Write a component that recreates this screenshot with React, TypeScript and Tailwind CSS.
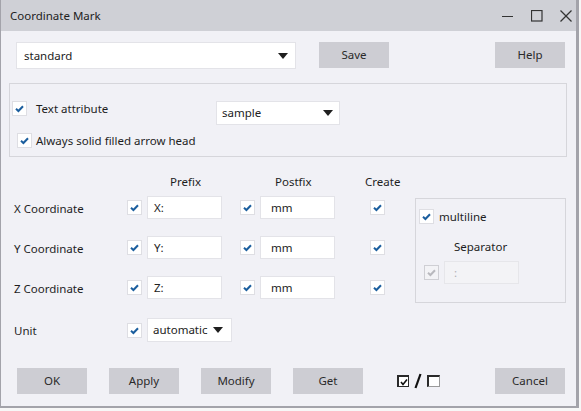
import React from 'react';

const font = { fontFamily: '"Noto Sans", "Open Sans", sans-serif' };

const Check: React.FC<{ disabled?: boolean; className?: string }> = ({ disabled, className = '' }) => (
  <div
    className={`w-[15px] h-[15px] shrink-0 flex items-center justify-center border ${
      disabled ? 'bg-[#f3f3f6] border-[#cfcfd4]' : 'bg-white border-[#dedee3]'
    } ${className}`}
  >
    <svg width="11" height="11" viewBox="0 0 11 11">
      <polyline
        points="2,5.8 4.4,8 9,3.2"
        fill="none"
        stroke={disabled ? '#b9b9be' : '#1b5e9e'}
        strokeWidth="2"
      />
    </svg>
  </div>
);

const Arrow: React.FC = () => (
  <svg width="10" height="6" viewBox="0 0 10 6" className="shrink-0">
    <polygon points="0,0 10,0 5,6" fill="#1f1f1f" />
  </svg>
);

const Btn: React.FC<{ label: string; className?: string }> = ({ label, className = '' }) => (
  <div
    className={`w-[70px] h-[26px] bg-[#cdcdd3] flex items-center justify-center text-[11.5px] text-[#2a2a2a] ${className}`}
  >
    {label}
  </div>
);

const Field: React.FC<{ value: string; pl?: string; disabled?: boolean }> = ({ value, pl = 'pl-[6px]', disabled }) => (
  <div
    className={`w-[75px] h-[23px] flex items-center ${pl} border text-[11.5px] ${
      disabled ? 'bg-[#f3f3f6] border-[#e6e6ea] text-[#b0b0b5]' : 'bg-white border-[#e3e3e8] text-[#222]'
    }`}
  >
    {value}
  </div>
);

const CoordRow: React.FC<{ label: string; prefix: string; className?: string }> = ({ label, prefix, className = '' }) => (
  <div className={`flex items-center h-[23px] ${className}`}>
    <div className="w-[113px] text-[11.5px] text-[#1e1e1e] pt-[2px]">{label}</div>
    <Check />
    <div className="w-[5px]" />
    <Field value={prefix} />
    <div className="w-[18px]" />
    <Check />
    <div className="w-[5px]" />
    <Field value="mm" pl="pl-[10px]" />
    <div className="w-[35px]" />
    <Check />
  </div>
);

const App: React.FC = () => {
  return (
    <div className="w-[581px] h-[411px] bg-[#f7f7f7] overflow-hidden" style={font}>
      <div className="w-[579px] h-[408px] border-l border-r-[3px] border-b-2 border-[#a3a3aa] bg-[#f1f1f6] flex flex-col">
        {/* Title bar */}
        <div className="h-[31px] bg-[#cfd0d6] flex items-center shrink-0">
          <span className="ml-[9px] text-[11.5px] text-[#222]">Coordinate Mark</span>
          <div className="ml-auto flex items-center">
            <svg width="12" height="12" viewBox="0 0 12 12" className="mr-[17px]">
              <line x1="0" y1="6.5" x2="11" y2="6.5" stroke="#333" strokeWidth="1" />
            </svg>
            <svg width="12" height="12" viewBox="0 0 12 12" className="mr-[17px]">
              <rect x="0.5" y="0.5" width="10.5" height="10.5" fill="none" stroke="#333" strokeWidth="1.2" />
            </svg>
            <svg width="12" height="12" viewBox="0 0 12 12" className="mr-[4px]">
              <line x1="0.5" y1="0.5" x2="11.5" y2="11.5" stroke="#333" strokeWidth="1.2" />
              <line x1="11.5" y1="0.5" x2="0.5" y2="11.5" stroke="#333" strokeWidth="1.2" />
            </svg>
          </div>
        </div>

        {/* Top row */}
        <div className="flex items-start mt-[11px] pl-[15px] pr-[11px]">
          <div className="w-[280px] h-[27px] bg-white border border-[#e3e3e8] flex items-center pl-[7px] pr-[7px] text-[11.5px] text-[#222]">
            <span className="flex-1">standard</span>
            <Arrow />
          </div>
          <Btn label="Save" className="ml-[23px]" />
          <Btn label="Help" className="ml-auto" />
        </div>

        {/* Text attribute group */}
        <div className="ml-[8px] w-[558px] h-[74px] mt-[14px] border border-[#d6d6db] flex flex-col">
          <div className="flex items-start h-[23px] mt-[17px]">
            <Check className="ml-[2px]" />
            <span className="ml-[9px] w-[180px] text-[11.5px] text-[#1e1e1e] leading-[16px]">Text attribute</span>
            <div className="w-[124px] h-[24px] bg-white border border-[#e3e3e8] flex items-center pl-[5px] pr-[6px] text-[11.5px] text-[#222]">
              <span className="flex-1">sample</span>
              <Arrow />
            </div>
          </div>
          <div className="flex items-center h-[15px] mt-[9px]">
            <Check className="ml-[7px]" />
            <span className="ml-[4px] text-[11.5px] text-[#1e1e1e]">Always solid filled arrow head</span>
          </div>
        </div>

        {/* Coordinates */}
        <div className="flex mt-[17px] pl-[13px]">
          <div className="w-[401px] flex flex-col">
            <div className="flex h-[16px] items-center text-[11.5px] text-[#1e1e1e]">
              <span className="ml-[156px] w-[105px]">Prefix</span>
              <span className="w-[90px]">Postfix</span>
              <span>Create</span>
            </div>
            <CoordRow label="X Coordinate" prefix="X:" className="mt-[6px]" />
            <CoordRow label="Y Coordinate" prefix="Y:" className="mt-[17px]" />
            <CoordRow label="Z Coordinate" prefix="Z:" className="mt-[17px]" />
            <div className="flex items-center h-[24px] mt-[19px]">
              <div className="w-[113px] text-[11.5px] text-[#1e1e1e] pt-[2px]">Unit</div>
              <Check />
              <div className="w-[5px]" />
              <div className="w-[85px] h-[24px] bg-white border border-[#e3e3e8] flex items-center pl-[5px] pr-[8px] text-[11.5px] text-[#222]">
                <span className="flex-1">automatic</span>
                <Arrow />
              </div>
            </div>
          </div>

          {/* Multiline group */}
          <div className="mt-[24px] w-[151px] h-[105px] border border-[#d6d6db] flex flex-col">
            <div className="flex items-center mt-[9px] ml-[3px]">
              <Check />
              <span className="ml-[5px] text-[11.5px] text-[#1e1e1e]">multiline</span>
            </div>
            <span className="ml-[38px] mt-[14px] text-[11.5px] text-[#1e1e1e] leading-[16px]">Separator</span>
            <div className="flex items-center mt-[6px] ml-[8px]">
              <Check disabled />
              <div className="w-[5px]" />
              <Field value=":" pl="pl-[9px]" disabled />
            </div>
          </div>
        </div>

        {/* Bottom buttons */}
        <div className="flex items-center mt-[26px] pl-[16px] pr-[11px]">
          <Btn label="OK" />
          <Btn label="Apply" className="ml-[22px]" />
          <Btn label="Modify" className="ml-[22px]" />
          <Btn label="Get" className="ml-[22px]" />
          <div className="ml-[34px] flex items-center">
            <div className="w-[12px] h-[12px] bg-white border-t-2 border-l-2 border-r border-b border-[#2a2a2a] flex items-center justify-center">
              <svg width="8" height="8" viewBox="0 0 8 8">
                <polyline points="1,4 3,6.5 7,1.5" fill="none" stroke="#111" strokeWidth="1.6" />
              </svg>
            </div>
            <svg width="10" height="16" viewBox="0 0 10 16" className="ml-[4px]">
              <line x1="7.5" y1="1" x2="2.5" y2="15" stroke="#111" strokeWidth="2.2" />
            </svg>
            <div className="ml-[4px] w-[13px] h-[12px] bg-white border-t-2 border-l-2 border-[#2a2a2a] border-r border-b border-r-[#9a9a9a] border-b-[#9a9a9a]" />
          </div>
          <Btn label="Cancel" className="ml-auto" />
        </div>
      </div>
    </div>
  );
};

export default App;
